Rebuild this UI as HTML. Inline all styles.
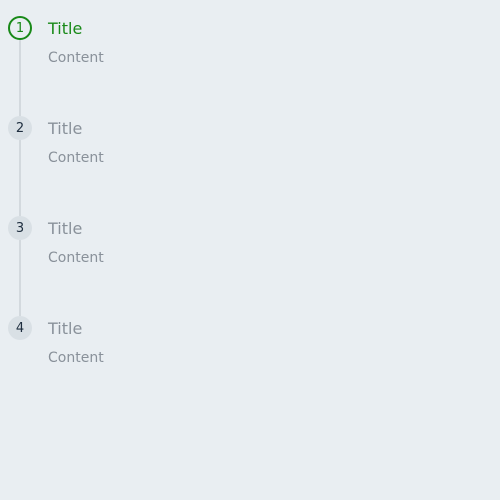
<!DOCTYPE html><html><head><style>
body{margin:0;width:500px;height:500px;background:#e9eef2;font-family:"DejaVu Sans","Liberation Sans",sans-serif;position:relative;overflow:hidden}
.c{position:absolute;left:8px;width:24px;height:24px;border-radius:50%;box-sizing:border-box;background:#d9e0e5;color:#1d2d3e;font-size:13px;line-height:25px;text-align:center}
.c.a{background:transparent;border:2px solid #188918;color:#188918;line-height:21px}
.l{position:absolute;left:19px;width:2px;background:#d3d9de;height:76px}
.t{position:absolute;left:48px;font-size:16px;color:#89919a}
.t.a{color:#188918}
.s{position:absolute;left:48px;font-size:14px;color:#89919a}
</style></head><body>
<div class="c a" style="top:16px">1</div><div class="l" style="top:40px"></div>
<div class="t a" style="top:19px">Title</div><div class="s" style="top:50px">Content</div>
<div class="c" style="top:116px">2</div><div class="l" style="top:140px"></div>
<div class="t" style="top:119px">Title</div><div class="s" style="top:150px">Content</div>
<div class="c" style="top:216px">3</div><div class="l" style="top:240px"></div>
<div class="t" style="top:219px">Title</div><div class="s" style="top:250px">Content</div>
<div class="c" style="top:316px">4</div>
<div class="t" style="top:319px">Title</div><div class="s" style="top:350px">Content</div>
</body></html>
